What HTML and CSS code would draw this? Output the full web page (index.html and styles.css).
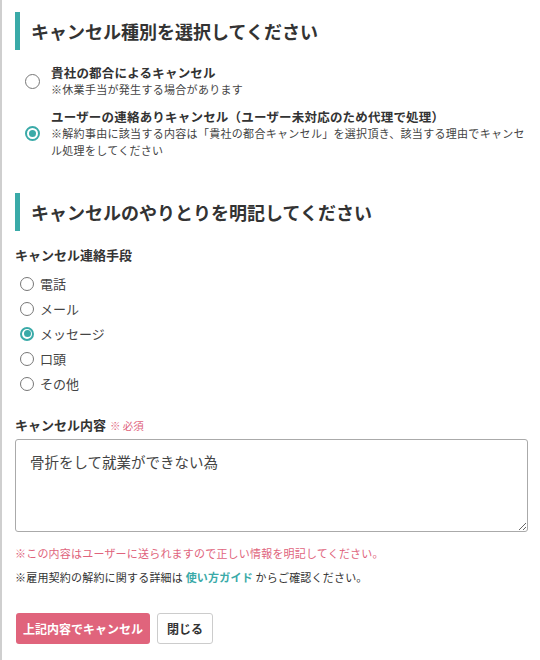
FILE: index.html
```html
<!DOCTYPE html>
<html lang="ja">
<head>
  <meta charset="utf-8">
  <link rel="stylesheet" href="styles.css">
</head>
<body>
  <div class="panel">
    <h2 class="section-title">キャンセル種別を選択してください</h2>

    <div class="type-list">
      <label class="type-option">
        <span class="radio"></span>
        <span class="type-text">
          <span class="type-name">貴社の都合によるキャンセル</span>
          <span class="type-note">※休業手当が発生する場合があります</span>
        </span>
      </label>
      <label class="type-option">
        <span class="radio checked"></span>
        <span class="type-text">
          <span class="type-name">ユーザーの連絡ありキャンセル（ユーザー未対応のため代理で処理）</span>
          <span class="type-note">※解約事由に該当する内容は「貴社の都合キャンセル」を選択頂き、該当する理由でキャンセル処理をしてください</span>
        </span>
      </label>
    </div>

    <h2 class="section-title second">キャンセルのやりとりを明記してください</h2>

    <div class="field-label">キャンセル連絡手段</div>
    <div class="method-list">
      <label class="method"><span class="radio small"></span>電話</label>
      <label class="method"><span class="radio small"></span>メール</label>
      <label class="method"><span class="radio small checked"></span>メッセージ</label>
      <label class="method"><span class="radio small"></span>口頭</label>
      <label class="method"><span class="radio small"></span>その他</label>
    </div>

    <div class="field-label content-label">キャンセル内容 <span class="required">※ 必須</span></div>
    <textarea class="content-input">骨折をして就業ができない為</textarea>

    <p class="note warn">※この内容はユーザーに送られますので正しい情報を明記してください。</p>
    <p class="note">※雇用契約の解約に関する詳細は <a class="guide-link" href="#">使い方ガイド</a> からご確認ください。</p>

    <div class="actions">
      <button class="btn btn-cancel">上記内容でキャンセル</button>
      <button class="btn btn-close">閉じる</button>
    </div>
  </div>
</body>
</html>
```

FILE: styles.css
```css
body {
  margin: 0;
  font-family: "Noto Sans CJK JP", "Noto Sans", sans-serif;
  color: #333;
  background: #fff;
}

.panel {
  min-height: 660px;
  box-sizing: border-box;
  border-left: 2px solid #cfcfcf;
  padding: 12px 12px 0 13px;
}

.section-title {
  margin: 0;
  height: 38px;
  line-height: 38px;
  border-left: 5px solid #3aaaa8;
  padding-left: 11px;
  font-size: 18px;
  font-weight: 700;
  color: #333;
}

.section-title.second {
  margin-top: 34px;
}

.type-list {
  display: flex;
  flex-direction: column;
  gap: 10px;
  margin-top: 14px;
  padding: 0 1px 0 10px;
}

.type-option {
  display: flex;
  align-items: center;
  gap: 11px;
}

.type-text {
  display: flex;
  flex-direction: column;
}

.type-name {
  font-size: 12.5px;
  font-weight: 700;
  line-height: 17px;
  letter-spacing: 0.2px;
}

.type-note {
  font-size: 11px;
  line-height: 17px;
  letter-spacing: 0.3px;
  color: #444;
}

.radio {
  flex: none;
  width: 15px;
  height: 15px;
  box-sizing: border-box;
  border: 1.5px solid #777;
  border-radius: 50%;
  display: flex;
  align-items: center;
  justify-content: center;
}

.radio.small {
  width: 14px;
  height: 14px;
}

.radio.checked {
  border: 2px solid #3aaaa8;
}

.radio.checked::after {
  content: "";
  width: 7px;
  height: 7px;
  border-radius: 50%;
  background: #3aaaa8;
}

.field-label {
  margin-top: 14px;
  font-size: 13px;
  font-weight: 700;
  line-height: 20px;
}

.method-list {
  margin-top: 6px;
  padding-left: 5px;
}

.method {
  display: flex;
  align-items: center;
  gap: 6px;
  height: 25px;
  font-size: 13px;
  color: #444;
}

.content-label {
  margin-top: 19px;
}

.required {
  font-size: 10.5px;
  font-weight: 400;
  color: #e0647c;
  margin-left: 1px;
}

.content-input {
  display: block;
  width: 100%;
  height: 93px;
  box-sizing: border-box;
  margin-top: 3px;
  padding: 11px 14px;
  border: 1px solid #aaa;
  border-radius: 3px;
  font-family: inherit;
  font-size: 14.5px;
  line-height: 21px;
  color: #444;
}

.note {
  margin: 6px 0 0;
  font-size: 11px;
  line-height: 18px;
  letter-spacing: 0.2px;
}

.note.warn {
  margin-top: 12px;
  color: #e0647c;
}

.guide-link {
  color: #3aaaa8;
  font-weight: 700;
  text-decoration: none;
}

.actions {
  display: flex;
  gap: 7px;
  margin-top: 27px;
  padding-left: 1px;
}

.btn {
  height: 31px;
  border-radius: 3px;
  font-family: inherit;
  font-size: 12px;
  font-weight: 700;
  cursor: pointer;
}

.btn-cancel {
  padding: 0 7px;
  border: none;
  background: #e0647c;
  color: #fff;
}

.btn-close {
  padding: 0 9px;
  border: 1px solid #ccc;
  background: #fff;
  color: #333;
}
```
